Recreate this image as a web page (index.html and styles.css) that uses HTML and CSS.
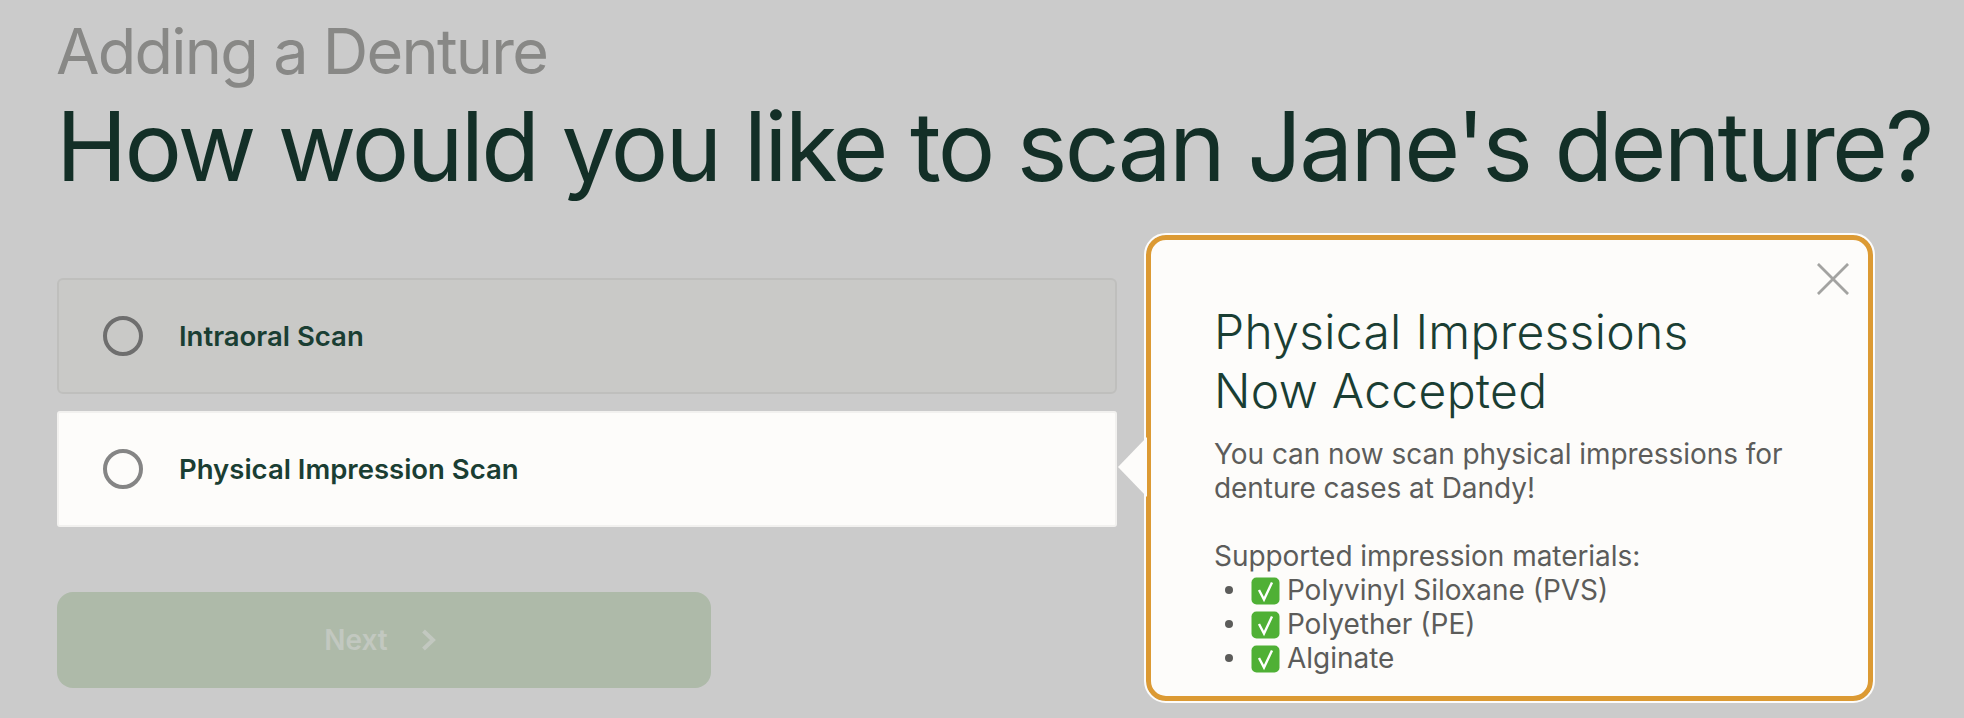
FILE: index.html
```html
<!DOCTYPE html>
<html lang="en">
<head>
    <meta charset="UTF-8">
    <title>Adding a Denture</title>
    <link rel="stylesheet" href="styles.css">
</head>
<body>
    <div class="page">
        <div class="eyebrow">Adding a Denture</div>
        <h1 class="title">How would you like to scan Jane's denture?</h1>

        <div class="options">
            <div class="option">
                <span class="radio"></span>
                <span class="option-label">Intraoral Scan</span>
            </div>
            <div class="option option-active">
                <span class="radio"></span>
                <span class="option-label">Physical Impression Scan</span>
            </div>
        </div>

        <button class="next-btn" type="button" disabled>
            Next
            <svg class="next-icon" viewBox="0 0 15 22" width="15" height="22">
                <path d="M2.5 2 L12 11 L2.5 20" fill="none" stroke="currentColor" stroke-width="4"/>
            </svg>
        </button>

        <div class="popover">
            <span class="popover-arrow"></span>
            <svg class="popover-close" viewBox="0 0 34 34" width="32" height="32">
                <path d="M1 1 L33 33 M33 1 L1 33" fill="none" stroke="currentColor" stroke-width="3"/>
            </svg>
            <h2 class="popover-title">Physical Impressions<br>Now Accepted</h2>
            <p class="popover-text">You can now scan physical impressions for<br>denture cases at Dandy!</p>
            <p class="popover-text popover-sub">Supported impression materials:</p>
            <ul class="material-list">
                <li><svg class="check" viewBox="0 0 29 28" width="29" height="28"><rect x="0.5" y="0.5" width="28" height="27" rx="5" fill="#4fb035"/><path d="M8 13 L13 22.5 L21 5.5" fill="none" stroke="#fff" stroke-width="2.4"/></svg> Polyvinyl Siloxane (PVS)</li>
                <li><svg class="check" viewBox="0 0 29 28" width="29" height="28"><rect x="0.5" y="0.5" width="28" height="27" rx="5" fill="#4fb035"/><path d="M8 13 L13 22.5 L21 5.5" fill="none" stroke="#fff" stroke-width="2.4"/></svg> Polyether (PE)</li>
                <li><svg class="check" viewBox="0 0 29 28" width="29" height="28"><rect x="0.5" y="0.5" width="28" height="27" rx="5" fill="#4fb035"/><path d="M8 13 L13 22.5 L21 5.5" fill="none" stroke="#fff" stroke-width="2.4"/></svg> Alginate</li>
            </ul>
        </div>
    </div>
</body>
</html>
```

FILE: styles.css
```css
* {
    margin: 0;
    padding: 0;
    box-sizing: border-box;
}

body {
    background: #cbcbcb;
    font-family: Inter, 'Liberation Sans', sans-serif;
    overflow: hidden;
}

.page {
    position: relative;
    height: 718px;
    padding: 16px 0 0 56px;
}

.eyebrow {
    margin-bottom: 2px;
    font-size: 63px;
    line-height: 70px;
    letter-spacing: -1.75px;
    color: #888886;
}

.title {
    font-size: 96px;
    font-weight: 400;
    line-height: 116px;
    letter-spacing: -2.75px;
    color: #132f27;
    white-space: nowrap;
}

.options {
    width: 1060px;
    margin: 74px 0 0 1px;
    display: flex;
    flex-direction: column;
    gap: 17px;
}

.option {
    height: 116px;
    padding-left: 44px;
    display: flex;
    align-items: center;
    gap: 36px;
    background: #c9c9c7;
    border: 2px solid #bfbfbd;
    border-radius: 6px;
}

.option-active {
    background: #fdfcfa;
    border-color: #f2f1ef;
    border-radius: 3px;
}

.radio {
    width: 40px;
    height: 40px;
    border: 4px solid #6e6e6e;
    border-radius: 50%;
}

.option-active .radio {
    border-color: #858585;
}

.option-label {
    font-size: 27.5px;
    font-weight: 600;
    color: #1a3e33;
}

.next-btn {
    width: 654px;
    height: 96px;
    margin: 65px 0 0 1px;
    display: flex;
    align-items: center;
    justify-content: center;
    gap: 33px;
    padding-right: 8px;
    background: #aebaa9;
    border: none;
    border-radius: 16px;
    font-family: Inter, 'Liberation Sans', sans-serif;
    font-size: 28px;
    font-weight: 600;
    color: #c2c8c0;
}

.popover {
    position: absolute;
    left: 1146px;
    top: 235px;
    width: 727px;
    height: 466px;
    padding: 62px 0 0 63px;
    background: #fdfcfa;
    border: 5px solid #dc9a33;
    outline: 2px solid #fdfcfa;
    border-radius: 20px;
    color: #5c5c5a;
}

.popover-arrow {
    position: absolute;
    left: -33px;
    top: 197px;
    width: 29px;
    height: 60px;
    background: #fdfcfa;
    clip-path: polygon(100% 0, 100% 100%, 0 50%);
}

.popover-close {
    position: absolute;
    right: 19px;
    top: 23px;
    color: #a3a3a1;
}

.popover-title {
    font-size: 48px;
    font-weight: 300;
    line-height: 59px;
    letter-spacing: 0.3px;
    color: #1a3e33;
}

.popover-text {
    margin-top: 17px;
    font-size: 28px;
    line-height: 34px;
    letter-spacing: -0.05px;
}

.popover-sub {
    margin-top: 34px;
}

.material-list {
    padding-left: 37px;
    list-style: none;
    font-size: 28px;
    line-height: 34px;
}

.material-list li {
    position: relative;
}

.material-list li::before {
    content: "";
    position: absolute;
    left: -26px;
    top: 13px;
    width: 8px;
    height: 8px;
    background: #5c5c5a;
    border-radius: 50%;
}

.check {
    vertical-align: -5px;
    margin-right: -1px;
}
```
